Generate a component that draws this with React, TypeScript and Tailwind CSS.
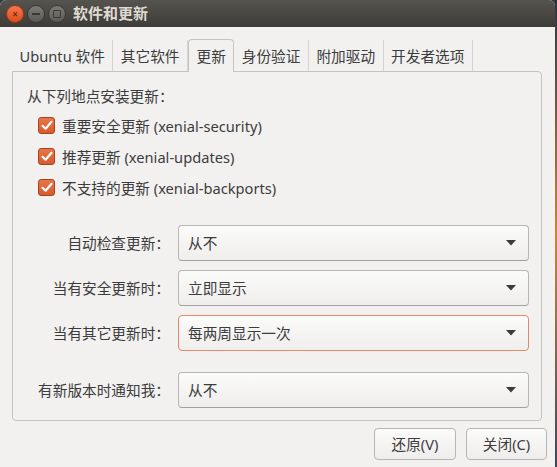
import React from 'react';

const FONT = { fontFamily: '"Noto Sans", "Noto Sans CJK SC", sans-serif' };

const tabs = ['Ubuntu 软件', '其它软件', '更新', '身份验证', '附加驱动', '开发者选项'];

const sources = [
  '重要安全更新 (xenial-security)',
  '推荐更新 (xenial-updates)',
  '不支持的更新 (xenial-backports)',
];

function CheckBox() {
  return (
    <span className="flex h-[17px] w-[17px] items-center justify-center rounded-[3px] border border-[#a8441c] bg-gradient-to-b from-[#e8754a] to-[#d85a2c]">
      <svg width="12" height="11" viewBox="0 0 12 11">
        <path d="M1.5 5.8 L4.6 8.7 L10.5 1.8" fill="none" stroke="#fff" strokeWidth="2.2" strokeLinecap="round" strokeLinejoin="round" />
      </svg>
    </span>
  );
}

function Combo({ label, value, focused }: { label: string; value: string; focused?: boolean }) {
  return (
    <div className="flex items-center">
      <span className="w-[165px] pr-[8px] text-right">{label}</span>
      <div
        className={
          'flex h-[36px] w-[351px] items-center justify-between rounded-[4px] border bg-gradient-to-b from-[#fbfbfa] to-[#efeeec] pl-[9px] pr-[12px] ' +
          (focused ? 'border-[#e58a67]' : 'border-[#b8b6b2] border-b-[#a3a19d]')
        }
      >
        <span>{value}</span>
        <svg width="10" height="6" viewBox="0 0 10 6">
          <path d="M0 0 L10 0 L5 5.5 Z" fill="#3c3c3c" />
        </svg>
      </div>
    </div>
  );
}

export default function App() {
  return (
    <div className="flex h-[467px] w-[557px] bg-[#2c3a4a] text-[14.67px] text-[#3c3c3c]" style={FONT}>
      <div className="flex w-[555px] flex-col overflow-hidden rounded-t-[6px] bg-[#f2f1f0]">
        {/* Title bar */}
        <div className="flex h-[27px] items-center bg-gradient-to-b from-[#56544e] to-[#3d3c38] pl-[6px]">
          <span className="flex h-[18px] w-[18px] items-center justify-center rounded-full border border-[#9c3a14] bg-gradient-to-b from-[#f5784a] to-[#df4b19] text-[10px] leading-none text-[#5a1a05]">
            ×
          </span>
          <span className="ml-[3px] flex h-[18px] w-[18px] items-center justify-center rounded-full border border-[#3a3934] bg-gradient-to-b from-[#7d7b75] to-[#5c5a55]">
            <span className="h-[2px] w-[8px] bg-[#3a3934]" />
          </span>
          <span className="ml-[3px] flex h-[18px] w-[18px] items-center justify-center rounded-full border border-[#3a3934] bg-gradient-to-b from-[#7d7b75] to-[#5c5a55]">
            <span className="h-[8px] w-[8px] rounded-[1px] border-[1.5px] border-[#3a3934]" />
          </span>
          <span className="ml-[7px] text-[15px] font-bold text-[#dfdbd2]">软件和更新</span>
        </div>

        {/* Tabs */}
        <div className="mt-[12px] flex h-[32px] items-end pl-[12px]">
          {tabs.map((t) => {
            const active = t === '更新';
            return (
              <div
                key={t}
                className={
                  active
                    ? 'relative z-10 -mb-px flex h-[33px] items-center rounded-t-[4px] border border-b-0 border-[#c6c4c0] bg-[#f2f1f0] px-[7.5px]'
                    : 'flex h-[31px] items-center border-r border-[#d5d3cf] px-[7.5px]'
                }
              >
                {t}
              </div>
            );
          })}
        </div>

        {/* Panel */}
        <div className="ml-[12px] mr-[13px] flex h-[350px] flex-col rounded-b-[4px] rounded-tr-[4px] border border-[#c6c4c0] pt-[13px]">
          <div className="pl-[14px]">从下列地点安装更新：</div>
          <div className="mt-[10px] flex flex-col gap-[14px] pl-[25px]">
            {sources.map((s) => (
              <label key={s} className="flex h-[17px] items-center gap-[7px]">
                <CheckBox />
                <span>{s}</span>
              </label>
            ))}
          </div>
          <div className="mt-[29px] flex flex-col gap-[9px]">
            <Combo label="自动检查更新：" value="从不" />
            <Combo label="当有安全更新时：" value="立即显示" />
            <Combo label="当有其它更新时：" value="每两周显示一次" focused />
            <div className="mt-[12px]">
              <Combo label="有新版本时通知我：" value="从不" />
            </div>
          </div>
        </div>

        {/* Buttons */}
        <div className="mt-[7px] flex justify-end gap-[10px] pr-[8px]">
          <button className="h-[32px] w-[82px] rounded-[4px] border border-[#b8b6b2] bg-gradient-to-b from-[#fbfbfa] to-[#eeedeb]">
            还原(V)
          </button>
          <button className="h-[32px] w-[81px] rounded-[4px] border border-[#b8b6b2] bg-gradient-to-b from-[#fbfbfa] to-[#eeedeb]">
            关闭(C)
          </button>
        </div>
      </div>
      <div className="w-[2px] bg-gradient-to-b from-[#2a3440] via-[#c98a2a] to-[#3a4656]" />
    </div>
  );
}
